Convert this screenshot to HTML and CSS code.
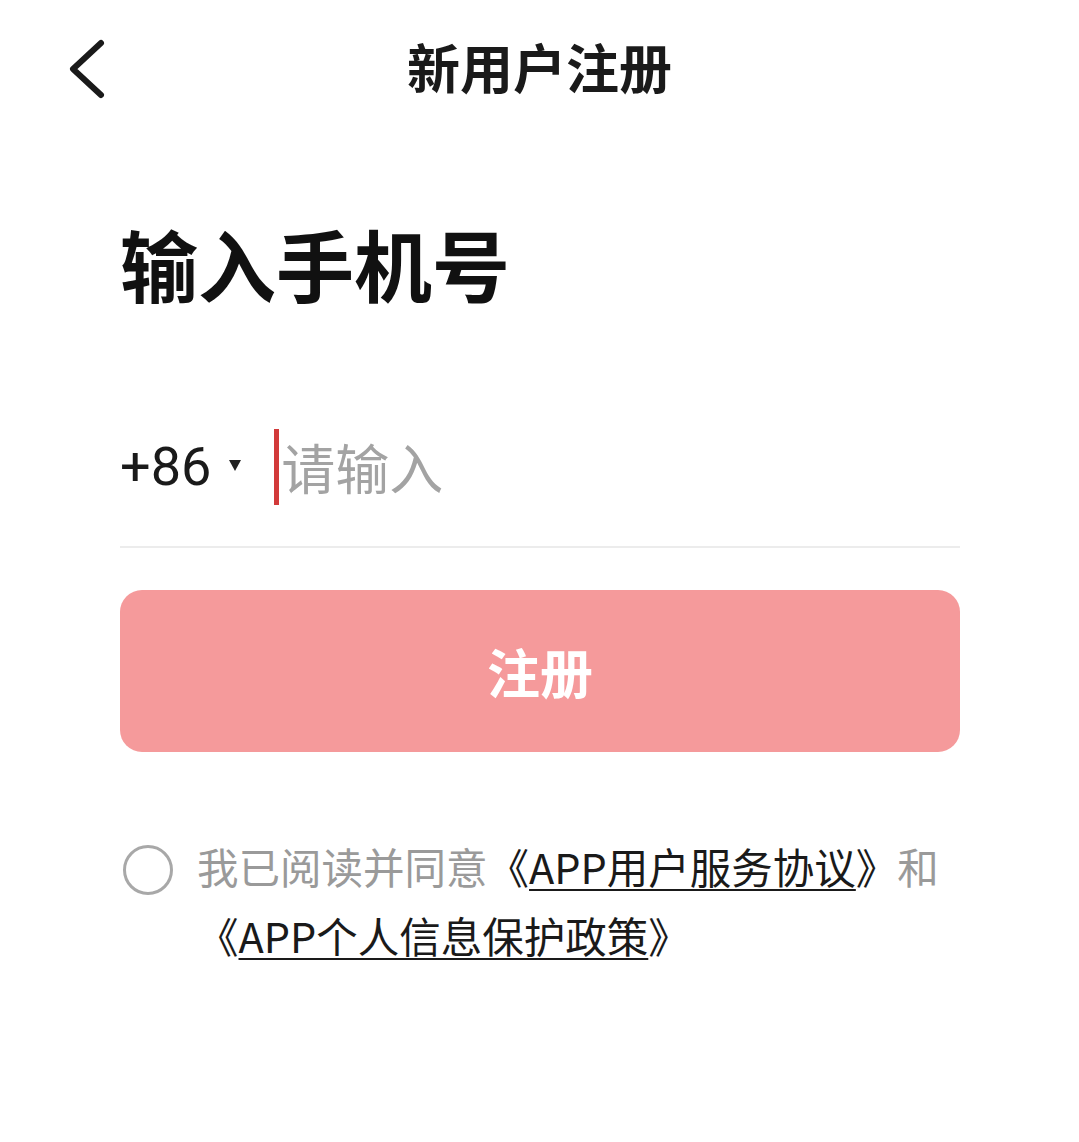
FILE: index.html
```html
<!DOCTYPE html>
<html lang="zh-CN">
<head>
<meta charset="utf-8">
<title>新用户注册</title>
<link rel="stylesheet" href="styles.css">
</head>
<body>
<div class="page">
  <header class="topbar">
    <span class="back" aria-label="返回">
      <svg width="44" height="64" viewBox="0 0 44 64">
        <polyline points="36,6 8,32 36,58" fill="none" stroke="#1a1a1a" stroke-width="6" stroke-linecap="round" stroke-linejoin="round"/>
      </svg>
    </span>
    <div class="topbar-title">新用户注册</div>
  </header>
  <main class="content">
    <h1 class="heading">输入手机号</h1>
    <div class="phone-row">
      <span class="code">+86</span>
      <span class="tri"></span>
      <span class="caret"></span>
      <span class="placeholder">请输入</span>
    </div>
    <button class="submit">注册</button>
    <div class="agree">
      <span class="radio"></span>
      <p class="agree-text">我已阅读并同意<span class="link">《<u>APP用户服务协议</u>》</span>和<br><span class="link">《<u>APP个人信息保护政策</u>》</span></p>
    </div>
  </main>
</div>
</body>
</html>
```
FILE: styles.css
```css
* { box-sizing: border-box; }
html, body { margin: 0; padding: 0; background: #ffffff; }
body {
  font-family: "Noto Sans CJK SC", "Noto Sans", sans-serif;
  color: #1a1a1a;
}
.page { width: 1079px; }
.topbar {
  position: relative;
  height: 132px;
  display: flex;
  align-items: center;
  justify-content: center;
}
.back {
  position: absolute;
  left: 65px;
  top: 37px;
  display: block;
  width: 44px;
  height: 64px;
}
.back svg { display: block; }
.topbar-title {
  font-size: 53px;
  font-weight: 700;
  line-height: 1;
  letter-spacing: 0;
}
.content { padding: 0 119px 0 120px; }
.heading {
  margin: 92px 0 0 0;
  font-size: 78px;
  line-height: 78px;
  font-weight: 700;
  color: #111;
}
.phone-row {
  margin-top: 128px;
  height: 118px;
  padding-bottom: 42px;
  border-bottom: 2px solid #ececec;
  display: flex;
  align-items: center;
}
.code {
  font-family: Roboto, "Noto Sans", sans-serif;
  font-size: 54px;
  line-height: 76px;
  color: #1a1a1a;
}
.tri {
  margin-left: 18px;
  margin-top: -4px;
  width: 0;
  height: 0;
  border-left: 6px solid transparent;
  border-right: 6px solid transparent;
  border-top: 11px solid #222;
}
.caret {
  margin-left: 33px;
  width: 5px;
  height: 76px;
  background: #d23a3a;
}
.placeholder {
  margin-left: 2px;
  font-size: 54px;
  line-height: 76px;
  color: #a3a3a3;
}
.submit {
  display: flex;
  align-items: center;
  justify-content: center;
  margin-top: 42px;
  width: 100%;
  height: 162px;
  border: none;
  border-radius: 22px;
  background: #f59a9b;
  color: #ffffff;
  font-family: "Noto Sans CJK SC", sans-serif;
  font-size: 53px;
  font-weight: 700;
  padding: 0;
}
.agree {
  margin-top: 80px;
  display: flex;
  align-items: flex-start;
}
.radio {
  flex: none;
  margin: 13px 24px 0 3px;
  width: 50px;
  height: 50px;
  border: 3px solid #a8a8a8;
  border-radius: 50%;
}
.agree-text {
  margin: 0;
  font-size: 41.5px;
  line-height: 69px;
  color: #9a9a9a;
}
.link { color: #1a1a1a; }
.link u {
  text-decoration: underline;
  text-decoration-thickness: 2px;
  text-underline-offset: 5px;
}
```
